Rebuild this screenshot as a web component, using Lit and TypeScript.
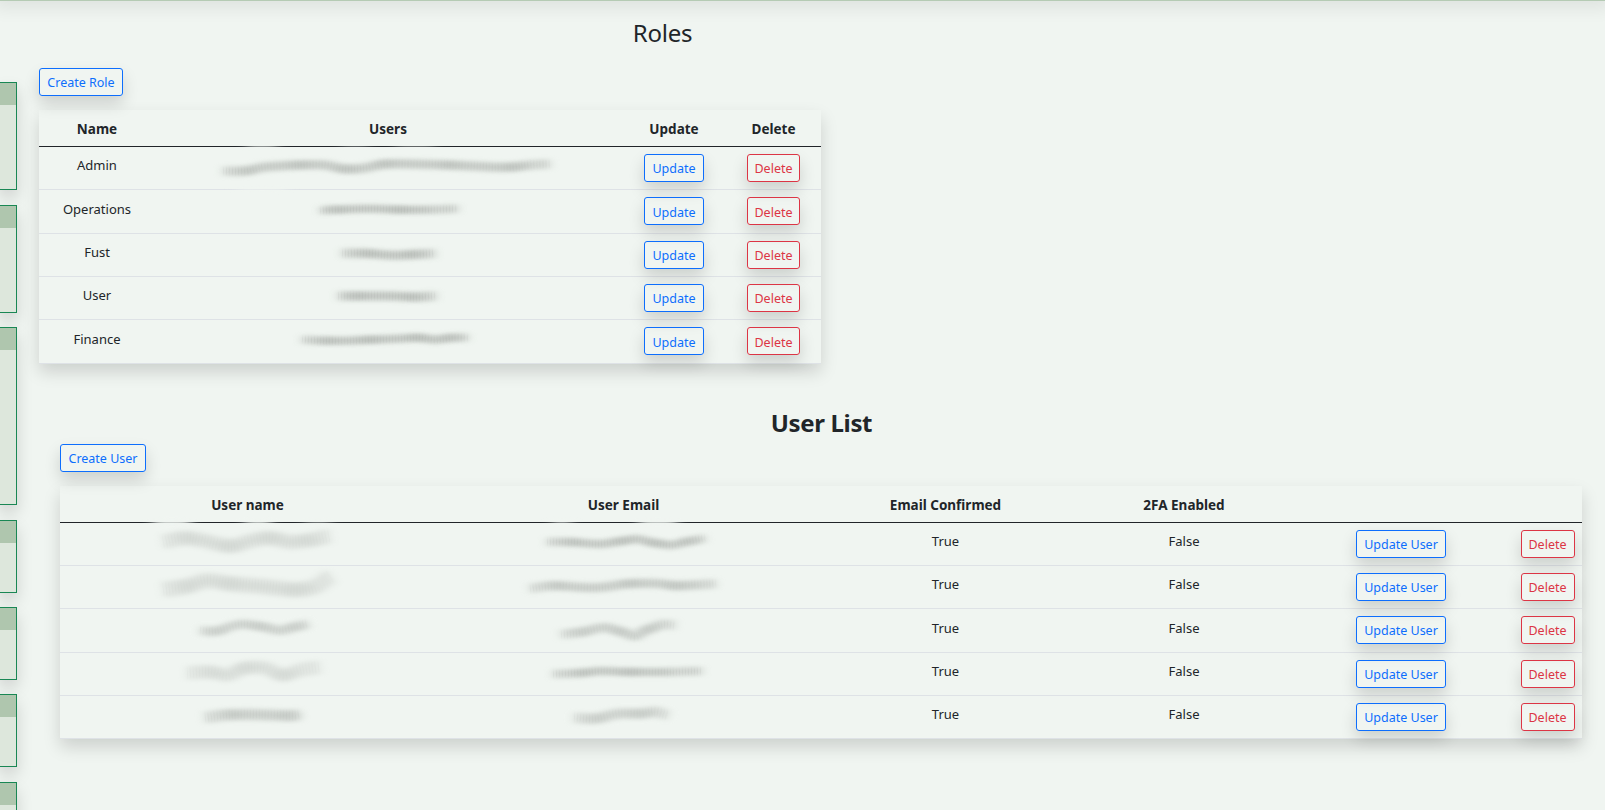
import { LitElement, html, svg, css } from "lit";
import { customElement, property } from "lit/decorators.js";

type Pt = [number, number];
interface Smear { pts: Pt[]; w: number; o: number; fades?: [number, number, number, number][] }

const curve = (p: Pt[]) => {
  let d = `M${p[0][0]} ${p[0][1]}`;
  for (let i = 0; i < p.length - 1; i++) {
    const a = p[Math.max(0, i - 1)], b = p[i], c = p[i + 1], e = p[Math.min(p.length - 1, i + 2)];
    d += ` C${b[0] + (c[0] - a[0]) / 6} ${b[1] + (c[1] - a[1]) / 6} ${c[0] - (e[0] - b[0]) / 6} ${c[1] - (e[1] - b[1]) / 6} ${c[0]} ${c[1]}`;
  }
  return d;
};

const roles: { name: string; s: Smear }[] = [
  { name: "Admin", s: { w: 9, o: 0.8, pts: [[223, 171], [245, 171], [265, 167], [300, 165], [325, 165], [345, 169], [365, 168], [385, 164], [410, 164], [450, 165], [490, 167], [512, 167], [530, 165], [550, 164]], fades: [[262, 146, 16, 0.5], [355, 146, 14, 0.25], [415, 146, 20, 0.3], [262, 189, 26, 0.5]] } },
  { name: "Operations", s: { w: 8, o: 0.9, pts: [[320, 211], [335, 210], [370, 209], [400, 210], [430, 210], [458, 209]] } },
  { name: "Fust", s: { w: 9, o: 0.9, pts: [[342, 253], [365, 253], [395, 255], [415, 254], [435, 253]] } },
  { name: "User", s: { w: 9, o: 0.9, pts: [[338, 296], [355, 296], [390, 296], [415, 297], [436, 296]] } },
  { name: "Finance", s: { w: 8, o: 0.9, pts: [[302, 340], [325, 341], [350, 341], [370, 340], [400, 339], [418, 338], [435, 340], [452, 338], [468, 338]] } },
];

const users: { name: Smear; mail: Smear }[] = [
  {
    name: { w: 14, o: 0.45, pts: [[163, 542], [185, 538], [205, 541], [230, 546], [250, 541], [270, 538], [290, 542], [310, 540], [330, 536]], fades: [[172, 522, 20, 0.8], [258, 522, 14, 0.7], [318, 522, 14, 0.35]] },
    mail: { w: 8, o: 0.85, pts: [[547, 542], [570, 542], [600, 544], [622, 541], [637, 539], [655, 543], [672, 545], [690, 541], [705, 538]], fades: [[562, 522, 10, 0.5], [658, 522, 20, 0.75]] },
  },
  {
    name: { w: 15, o: 0.45, pts: [[163, 590], [185, 587], [207, 581], [230, 584], [265, 587], [295, 590], [315, 587], [331, 576]] },
    mail: { w: 9, o: 0.75, pts: [[530, 589], [555, 586], [595, 588], [630, 584], [660, 584], [675, 586], [700, 585], [716, 584]] },
  },
  {
    name: { w: 9, o: 0.65, pts: [[200, 631], [215, 632], [240, 625], [260, 627], [280, 631], [297, 627], [308, 624]] },
    mail: { w: 9, o: 0.7, pts: [[561, 635], [580, 633], [605, 628], [620, 632], [635, 637], [648, 630], [662, 625], [675, 626]] },
  },
  {
    name: { w: 13, o: 0.42, pts: [[187, 673], [210, 672], [228, 675], [245, 668], [265, 668], [283, 675], [300, 670], [320, 667]] },
    mail: { w: 8, o: 0.85, pts: [[553, 674], [580, 673], [600, 671], [630, 672], [670, 672], [702, 671]] },
  },
  {
    name: { w: 11, o: 0.7, pts: [[205, 718], [230, 715], [260, 715], [290, 716], [300, 715]] },
    mail: { w: 10, o: 0.65, pts: [[574, 718], [595, 719], [618, 714], [640, 714], [655, 712], [668, 716]] },
  },
];

const smear = (s: Smear, x: number, y: number, w: number) => {
  const d = curve(s.pts);
  const inner = s.pts.slice(1, -1);
  const core = inner.length > 1 ? curve(inner) : d;
  return html`<svg class="smear" width=${w} height="42" viewBox="${x} ${y} ${w} 42">
    ${svg`<defs>
      <filter id="soft" filterUnits="userSpaceOnUse" x="0" y="0" width="1605" height="810"><feGaussianBlur stdDeviation="5 2.3"/></filter>
      <filter id="haze" filterUnits="userSpaceOnUse" x="0" y="0" width="1605" height="810"><feGaussianBlur stdDeviation="6 1.2"/></filter>
      <filter id="grain" filterUnits="userSpaceOnUse" x="0" y="0" width="1605" height="810"><feGaussianBlur stdDeviation=".5 1.5"/></filter>
    </defs>
    ${(s.fades ?? []).map(f => svg`<ellipse cx=${f[0]} cy=${f[1]} rx=${f[2]} ry="3.5" fill="#f0f5f1" opacity=${f[3]} filter="url(#haze)"/>`)}
    <g fill="none" opacity=${s.o}>
      <path d=${d} stroke="#cdd2cd" stroke-width=${s.w * 1.1} filter="url(#soft)"/>
      <path d=${core} stroke="#b4b9b4" stroke-width=${s.w * 0.5} opacity=".65" filter="url(#soft)"/>
      ${inner.filter((_, i) => i % 2 === 0).map(p => svg`<ellipse cx=${p[0]} cy=${p[1]} rx="11" ry=${s.w * 0.4} fill="#a9aea9" opacity=".4" filter="url(#soft)"/>`)}
      <path d=${d} stroke="#8d918d" stroke-width=${s.w * 0.8} stroke-dasharray="1 2" opacity=".13" filter="url(#grain)"/>
    </g>`}
  </svg>`;
};

@customElement("side-card")
class SideCard extends LitElement {
  static styles = css`
    :host { display: block; box-sizing: border-box; border: 1px solid #198754; border-left: 0; background: #dde7dc; box-shadow: 0 8px 16px rgba(0,0,0,.15); }
    .head { height: 22px; background: #afc6ae; }
  `;
  render() { return html`<div class="head"></div>`; }
}

@customElement("app-button")
class AppButton extends LitElement {
  @property() label = "";
  @property({ type: Boolean, reflect: true }) danger = false;
  static styles = css`
    :host { display: block; width: max-content; }
    .btn { display: block; width: 100%; box-sizing: border-box; height: 28px; padding: 1.4px 0 0; margin: 0; border: 1px solid #0d6efd; border-radius: 3px; background: transparent; color: #0d6efd; font: 12.5px/23px "Noto Sans", sans-serif; text-align: center; white-space: nowrap; box-shadow: 0 8px 16px rgba(0,0,0,.15); }
    :host([danger]) .btn { color: #dc3545; border-color: #dc3545; }
  `;
  render() { return html`<button class="btn">${this.label}</button>`; }
}

@customElement("app-root")
class AppRoot extends LitElement {
  static styles = css`
    :host { display: block; height: 810px; overflow: hidden; background: #f0f5f1; color: #212529; font: 13px/21px "Noto Sans", sans-serif; }
    .bar { height: 60px; margin-top: -59px; background: #b5cbb4; box-shadow: 0 2px 16px 6px rgba(0,0,0,.07); }
    .layout { display: flex; height: 809px; }
    .side { flex: none; width: 17px; padding-top: 81px; }
    .side side-card { width: 17px; }
    .main { flex: 1; padding-left: 22px; }
    h1, h2 { margin: 0; text-align: center; font-size: 24px; line-height: 30px; white-space: nowrap; }
    h1 { font-weight: 400; width: 1247px; padding-top: 17px; letter-spacing: -.25px; }
    h2 { font-weight: 700; width: 1523px; letter-spacing: -.35px; }
    .b-role { width: 84px; margin-top: 20px; }
    .b-user { width: 86px; margin-top: 6px; }
    .b-update { width: 60px; }
    .b-delete { width: 53px; }
    .b-update-user { width: 90px; }
    .b-delete-user { width: 54px; }
    .users { padding-left: 21px; margin-top: 44px; }
    .table { margin-top: 14px; box-shadow: 0 8px 16px rgba(0,0,0,.15); }
    .t1 { width: 782px; }
    .t2 { width: 1522px; }
    .row { display: grid; box-sizing: border-box; height: 43.33px; border-bottom: 1px solid #dee2e6; }
    .t1 .row { grid-template-columns: 116px 466px 106px 93px; }
    .t2 .row { grid-template-columns: 375px 377px 267px 210px 224px 69px; }
    .row.head { height: 37px; border-bottom-color: #212529; font-weight: 700; }
    .cell { text-align: center; padding-top: 8.4px; height: 35px; box-sizing: border-box; }
    .head .cell { padding-top: 9px; height: 36px; font-size: 13.5px; }
    .act { display: flex; justify-content: center; align-items: flex-start; padding-top: 7px; }
    .smear { display: block; overflow: visible; }
  `;
  cards: [number, number][] = [[108, 15], [108, 14], [178, 15], [73, 14], [73, 14], [73, 15], [73, 0]];
  render() {
    return html`
      <div class="bar"></div>
      <div class="layout">
        <div class="side">
          ${this.cards.map(([h, gap]) => html`<side-card style="height:${h}px;margin-bottom:${gap}px"></side-card>`)}
        </div>
        <div class="main">
          <h1>Roles</h1>
          <app-button class="b-role" label="Create Role"></app-button>
          <div class="table t1">
            <div class="row head">${["Name", "Users", "Update", "Delete"].map(t => html`<div class="cell">${t}</div>`)}</div>
            ${roles.map((r, i) => html`<div class="row">
              <div class="cell">${r.name}</div>
              <div>${smear(r.s, 155, 147 + i * 43.33, 466)}</div>
              <div class="act"><app-button class="b-update" label="Update"></app-button></div>
              <div class="act"><app-button class="b-delete" danger label="Delete"></app-button></div>
            </div>`)}
          </div>
          <div class="users">
            <h2>User List</h2>
            <app-button class="b-user" label="Create User"></app-button>
            <div class="table t2">
              <div class="row head">${["User name", "User Email", "Email Confirmed", "2FA Enabled", "", ""].map(t => html`<div class="cell">${t}</div>`)}</div>
              ${users.map((u, i) => html`<div class="row">
                <div>${smear(u.name, 60, 523 + i * 43.33, 375)}</div>
                <div>${smear(u.mail, 435, 523 + i * 43.33, 377)}</div>
                <div class="cell">True</div>
                <div class="cell">False</div>
                <div class="act"><app-button class="b-update-user" label="Update User"></app-button></div>
                <div class="act"><app-button class="b-delete-user" danger label="Delete"></app-button></div>
              </div>`)}
            </div>
          </div>
        </div>
      </div>`;
  }
}
